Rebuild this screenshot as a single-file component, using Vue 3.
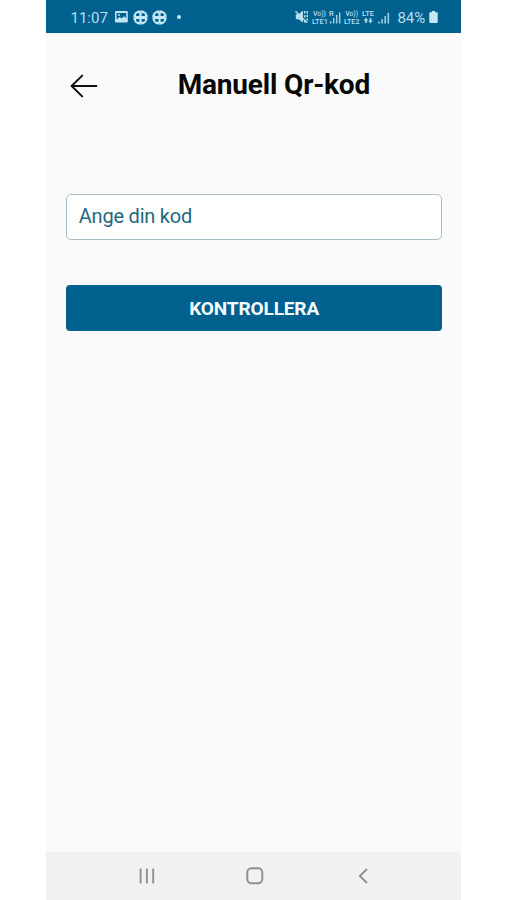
<template>
  <div class="phone">
    <div class="status-bar">
      <div class="status-left">
        <span class="time">11:07</span>
        <svg class="picture" width="13" height="12" viewBox="0 0 13 12">
          <rect width="12.8" height="11.5" rx="1.2" fill="#bfe4f3" />
          <path d="M1.6 2H11.2V7.3L9 5.2L6.7 7.6L4.7 6.1L1.6 8.5Z" fill="#00618f" />
          <circle cx="4" cy="4" r="1" fill="#bfe4f3" />
        </svg>
        <svg v-for="n in 2" :key="n" class="ball" width="15" height="15" viewBox="0 0 15 15">
          <circle cx="7.5" cy="7.5" r="7.3" fill="#c5e8f5" />
          <path
            d="M4 3.2H6.4V6.1H3.1V4.2ZM8.6 3.2H11L11.9 4.2V6.1H8.6ZM3.1 8.9H6.4V11.8H4L3.1 10.8ZM8.6 8.9H11.9V10.8L11 11.8H8.6Z"
            fill="#00618f"
          />
          <path d="M7.5 0V1.6M7.5 13.4V15M0 7.5H1.6M13.4 7.5H15" stroke="#2b81a8" stroke-width="0.7" />
        </svg>
        <span class="dot"></span>
      </div>
      <svg class="signals" width="96" height="18" viewBox="0 0 96 18">
        <!-- muted speaker -->
        <path d="M0.8 6.3H3.5L8 2.5V14.5L3.5 11.3H0.8Z" fill="#b5dff0" />
        <path d="M0.5 3.2L12.3 14.8" stroke="#b5dff0" stroke-width="1.5" />
        <path d="M9.8 3V5.6M12.2 3V5.4M9.8 7.2V9.4M12.2 6.8V9.2M12.2 10.5V12.8M9.8 12.6V14.8" stroke="#b5dff0" stroke-width="1.5" />
        <g class="tiny">
          <text x="18" y="8.4" textLength="13" lengthAdjust="spacingAndGlyphs">Vo))</text>
          <text x="17" y="15.7" textLength="16" lengthAdjust="spacingAndGlyphs">LTE1</text>
          <text x="34" y="8.4">R</text>
          <text x="50.5" y="8.4" textLength="12.5" lengthAdjust="spacingAndGlyphs">Vo))</text>
          <text x="49" y="15.7" textLength="15.5" lengthAdjust="spacingAndGlyphs">LTE2</text>
          <text x="67" y="8.4" textLength="12" lengthAdjust="spacingAndGlyphs">LTE</text>
        </g>
        <path d="M35.7 15.5V13.3M38.7 15.5V10M41.7 15.5V7M44.7 15.5V4.5" stroke="#9bcfe5" stroke-width="1.5" />
        <path d="M68.6 12.6L71 9.8L73.2 12.6H71.8V15H70.2V12.6ZM73.2 12.5L75.5 15.3L77.8 12.5H76.3V10H74.7V12.5Z" fill="#b5dff0" />
        <path d="M84 15.5V13.5M87.1 15.5V11M90.2 15.5V8M93.3 15.5V4.8" stroke="#9bcfe5" stroke-width="1.6" />
      </svg>
      <span class="percent">84%</span>
      <svg class="battery" width="9" height="12" viewBox="0 0 9 12">
        <path d="M2.8 0H6.2V1.2H7.8Q8.7 1.2 8.7 2.1V11Q8.7 12 7.8 12H1.2Q0.3 12 0.3 11V2.1Q0.3 1.2 1.2 1.2H2.8Z" fill="#c5e8f5" />
      </svg>
    </div>

    <header class="header">
      <button class="back" aria-label="Tillbaka">
        <svg width="28" height="24" viewBox="0 0 28 24">
          <path
            d="M12.2 1.6L1.6 12L12.2 22.4M1.8 12H26.4"
            fill="none"
            stroke="#111"
            stroke-width="2"
            stroke-linecap="round"
            stroke-linejoin="round"
          />
        </svg>
      </button>
      <h1 class="title">Manuell Qr-kod</h1>
    </header>

    <form class="form" @submit.prevent>
      <input v-model="code" class="code-input" type="text" placeholder="Ange din kod" />
      <button class="submit" type="submit">KONTROLLERA</button>
    </form>

    <nav class="nav-bar">
      <svg width="16" height="16" viewBox="0 0 16 16">
        <path d="M1.6 0.5V15.5M7.9 0.5V15.5M14.2 0.5V15.5" stroke="#909090" stroke-width="1.9" />
      </svg>
      <svg class="home" width="18" height="18" viewBox="0 0 18 18">
        <rect x="1.3" y="1.3" width="15" height="15" rx="4.2" fill="none" stroke="#909090" stroke-width="2" />
      </svg>
      <svg width="10" height="16" viewBox="0 0 10 16">
        <path d="M9 1L1.8 8L9 15" fill="none" stroke="#909090" stroke-width="1.9" />
      </svg>
    </nav>
  </div>
</template>

<script setup>
import { ref } from 'vue';

const code = ref('');
</script>

<style>
body {
  margin: 0;
  background: #fff;
}
</style>

<style scoped>
.phone {
  display: flex;
  flex-direction: column;
  box-sizing: border-box;
  width: 415.4px;
  height: 900px;
  margin-left: 46px;
  background: #fafafa;
  font-family: Roboto, "Liberation Sans", sans-serif;
}

.status-bar {
  display: flex;
  align-items: center;
  box-sizing: border-box;
  height: 32.7px;
  padding: 2px 23px 0 24.5px;
  background: #00618f;
  color: #b5dff0;
}

.status-left {
  display: flex;
  align-items: center;
  flex: 1;
}

.time {
  width: 38px;
  padding-top: 1px;
  font-size: 15px;
  line-height: 18px;
  white-space: nowrap;
}

.picture {
  margin-left: 6.5px;
}

.ball {
  margin-left: 4.8px;
}

.ball + .ball {
  margin-left: 4.3px;
}

.dot {
  width: 4px;
  height: 4px;
  margin-left: 10px;
  border-radius: 50%;
  background: #c5e8f5;
}

.tiny {
  fill: #b5dff0;
  font-size: 7.6px;
  font-weight: 500;
}

.percent {
  width: 28px;
  margin-left: 6.5px;
  padding-top: 1px;
  font-size: 15px;
  line-height: 18px;
}

.battery {
  margin-left: 4px;
}

.header {
  display: flex;
  align-items: center;
  height: 104px;
  padding-left: 24px;
}

.back {
  display: flex;
  padding: 3px 0 0;
  border: 0;
  background: none;
}

.title {
  margin: 0 0 0 79.7px;
  color: #080808;
  font-size: 28px;
  font-weight: 700;
  letter-spacing: -0.18px;
  line-height: 34px;
  white-space: nowrap;
}

.form {
  display: flex;
  flex: 1;
  flex-direction: column;
  gap: 45px;
  padding: 57.3px 19.5px 0 20.3px;
}

.code-input {
  box-sizing: border-box;
  width: 100%;
  height: 46px;
  padding: 0 11.5px 1px;
  border: 1px solid #a9bfc5;
  border-radius: 5px;
  outline: none;
  background: #fff;
  color: #246880;
  font-family: inherit;
  font-size: 20px;
  letter-spacing: -0.22px;
}

.code-input::placeholder {
  color: #246880;
  opacity: 1;
}

.submit {
  height: 46px;
  padding: 1px 0 0;
  border: 0;
  border-radius: 4px;
  background: #00618f;
  color: #f4fbff;
  font-family: inherit;
  font-size: 19px;
  font-weight: 700;
  letter-spacing: -0.12px;
}

.nav-bar {
  display: flex;
  align-items: center;
  justify-content: space-between;
  box-sizing: border-box;
  height: 48px;
  padding: 0 93px;
  background: #f1f1f1;
}

.home {
  margin-right: 3px;
}
</style>
